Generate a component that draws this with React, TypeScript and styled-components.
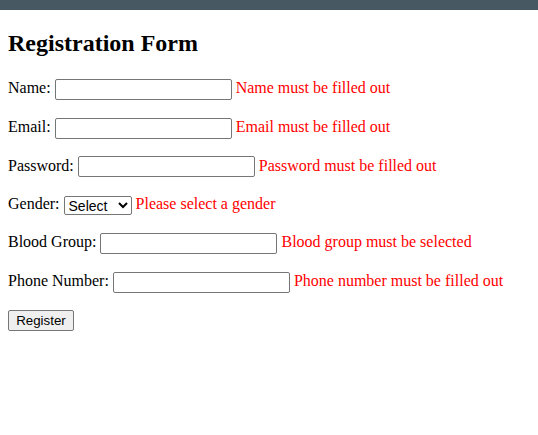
import styled, { createGlobalStyle } from 'styled-components';

const GlobalStyle = createGlobalStyle`
  body {
    margin: 8px;
    background: #fff;
    font-family: "Liberation Serif", "Times New Roman", serif;
    font-size: 16px;
    color: #000;
  }
`;

const fields = [
  { label: 'Name', type: 'text', error: 'Name must be filled out' },
  { label: 'Email', type: 'email', error: 'Email must be filled out' },
  { label: 'Password', type: 'password', error: 'Password must be filled out' },
];

export default function App() {
  return (
    <>
      <GlobalStyle />
      <TopBar />
      <FormTitle>Registration Form</FormTitle>
      <form onSubmit={(e) => e.preventDefault()}>
        {fields.map((f) => (
          <Row key={f.label}>
            {f.label}: <TextInput type={f.type} /> <ErrorText>{f.error}</ErrorText>
          </Row>
        ))}
        <Row>
          Gender:{' '}
          <GenderSelect defaultValue="">
            <option value="">Select</option>
            <option value="male">Male</option>
            <option value="female">Female</option>
          </GenderSelect>{' '}
          <ErrorText>Please select a gender</ErrorText>
        </Row>
        <Row>
          Blood Group: <TextInput type="text" /> <ErrorText>Blood group must be selected</ErrorText>
        </Row>
        <Row>
          Phone Number: <TextInput type="tel" /> <ErrorText>Phone number must be filled out</ErrorText>
        </Row>
        <Row>
          <RegisterButton type="submit">Register</RegisterButton>
        </Row>
      </form>
    </>
  );
}

const TopBar = styled.div`
  position: fixed;
  top: 0;
  left: 0;
  right: 0;
  height: 10px;
  background: #475863;
`;

const FormTitle = styled.h2`
  font-size: 24px;
  font-weight: 700;
  margin: 21px 0 20px;
  line-height: 28px;
`;

const Row = styled.p`
  margin: 16px 0;
  line-height: 22px;
`;

const TextInput = styled.input`
  box-sizing: border-box;
  width: 177px;
  height: 21px;
  padding: 1px 2px;
  border: 1px solid #767676;
  border-radius: 2px;
  font-family: "Liberation Sans", Arial, sans-serif;
  font-size: 13.33px;
  vertical-align: middle;
`;

const GenderSelect = styled.select`
  box-sizing: border-box;
  width: 68px;
  height: 19px;
  border: 1px solid #767676;
  border-radius: 2px;
  font-family: "Liberation Sans", Arial, sans-serif;
  font-size: 14px;
  vertical-align: middle;
  background: #fff;
`;

const ErrorText = styled.span`
  color: #ff0000;
`;

const RegisterButton = styled.button`
  box-sizing: border-box;
  width: 66px;
  height: 21px;
  padding: 1px 6px;
  border: 1px solid #767676;
  border-radius: 2px;
  background: #efefef;
  font-family: "Liberation Sans", Arial, sans-serif;
  font-size: 13.33px;
  color: #000;
`;
